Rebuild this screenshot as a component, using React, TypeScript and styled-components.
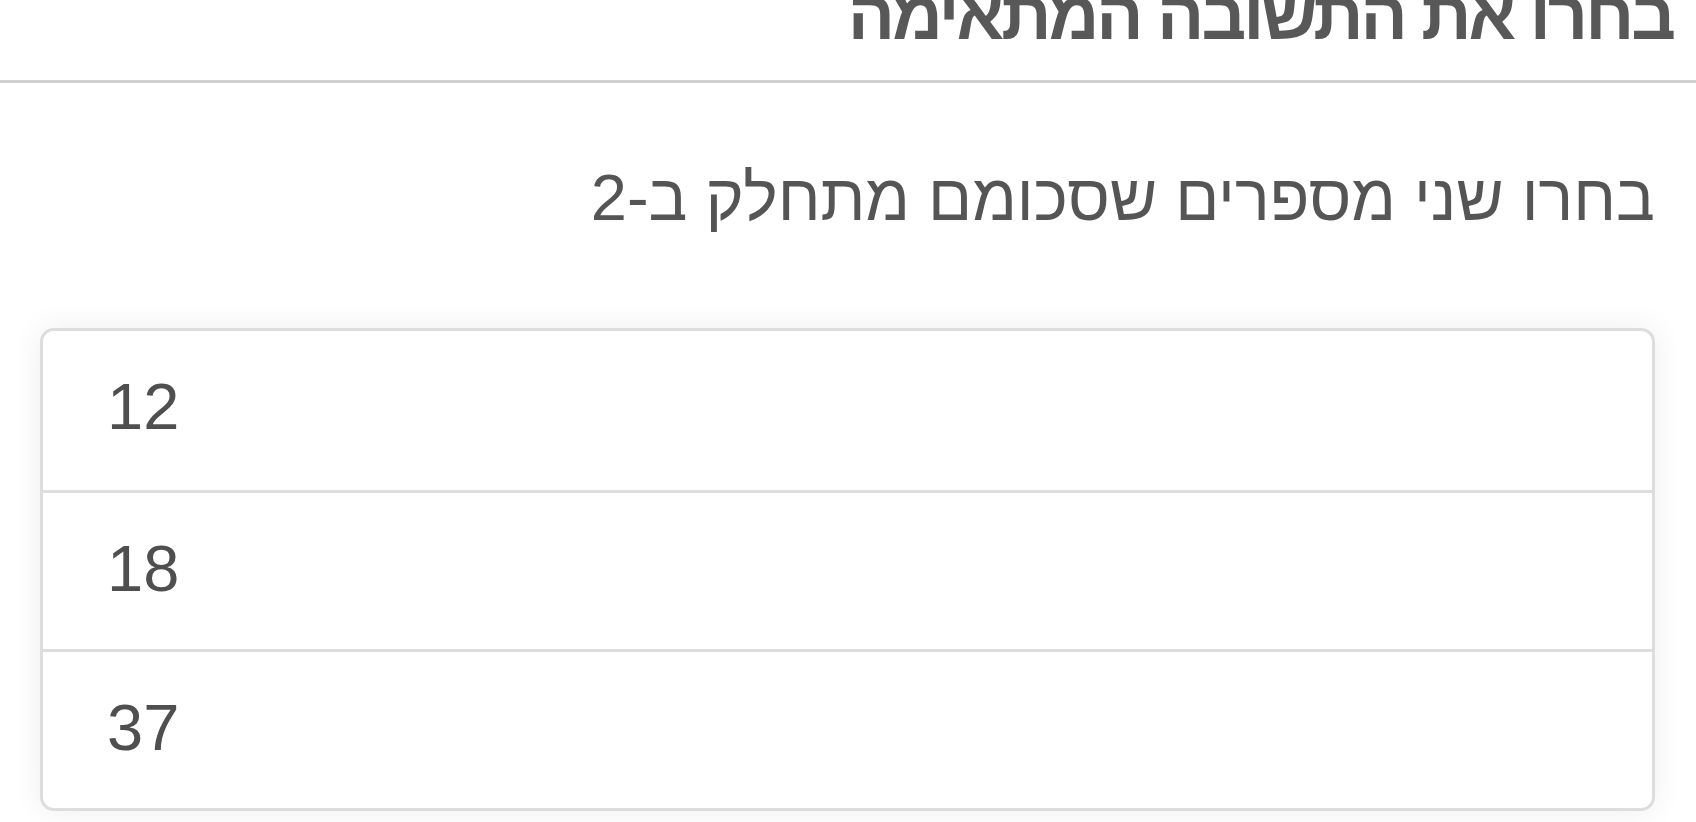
import React from "react";
import styled, { createGlobalStyle } from "styled-components";

const GlobalStyle = createGlobalStyle`
  html, body {
    margin: 0;
    padding: 0;
    background: #ffffff;
    overflow: hidden;
  }
  body {
    font-family: "Liberation Sans", Arial, sans-serif;
    color: #555555;
  }
`;

const Page = styled.div`
  direction: rtl;
  width: 1696px;
  height: 822px;
  overflow: hidden;
  display: flex;
  flex-direction: column;
`;

const Header = styled.header`
  margin-top: -25px;
  padding: 0 23px 25px 0;
  border-bottom: 3px solid #d0d0d0;
`;

const Title = styled.h1`
  margin: 0;
  font-size: 70px;
  font-weight: 700;
  letter-spacing: -3px;
  line-height: normal;
  color: #585858;
`;

const Content = styled.main`
  padding: 77px 41px 0 40px;
  display: flex;
  flex-direction: column;
`;

const Question = styled.p`
  margin: 0 0 93px 0;
  font-size: 65px;
  font-weight: 400;
  line-height: normal;
  color: #555555;
`;

const OptionList = styled.ul`
  list-style: none;
  margin: 0;
  padding: 0;
  border: 3px solid #dddddd;
  border-radius: 14px;
  background: #ffffff;
  box-shadow: 0 0 32px rgba(0, 0, 0, 0.07);
  overflow: hidden;
`;

const Option = styled.li`
  direction: ltr;
  text-align: left;
  height: 159px;
  box-sizing: border-box;
  padding: 38px 64px 47px 64px;
  font-size: 65px;
  line-height: normal;
  color: #4f4f4f;
  & + & {
    border-top: 3px solid #dddddd;
  }
`;

const options = ["12", "18", "37"];

export default function App() {
  return (
    <>
      <GlobalStyle />
      <Page>
        <Header>
          <Title>בחרו את התשובה המתאימה</Title>
        </Header>
        <Content>
          <Question>בחרו שני מספרים שסכומם מתחלק ב-2</Question>
          <OptionList>
            {options.map((o) => (
              <Option key={o}>{o}</Option>
            ))}
          </OptionList>
        </Content>
      </Page>
    </>
  );
}
